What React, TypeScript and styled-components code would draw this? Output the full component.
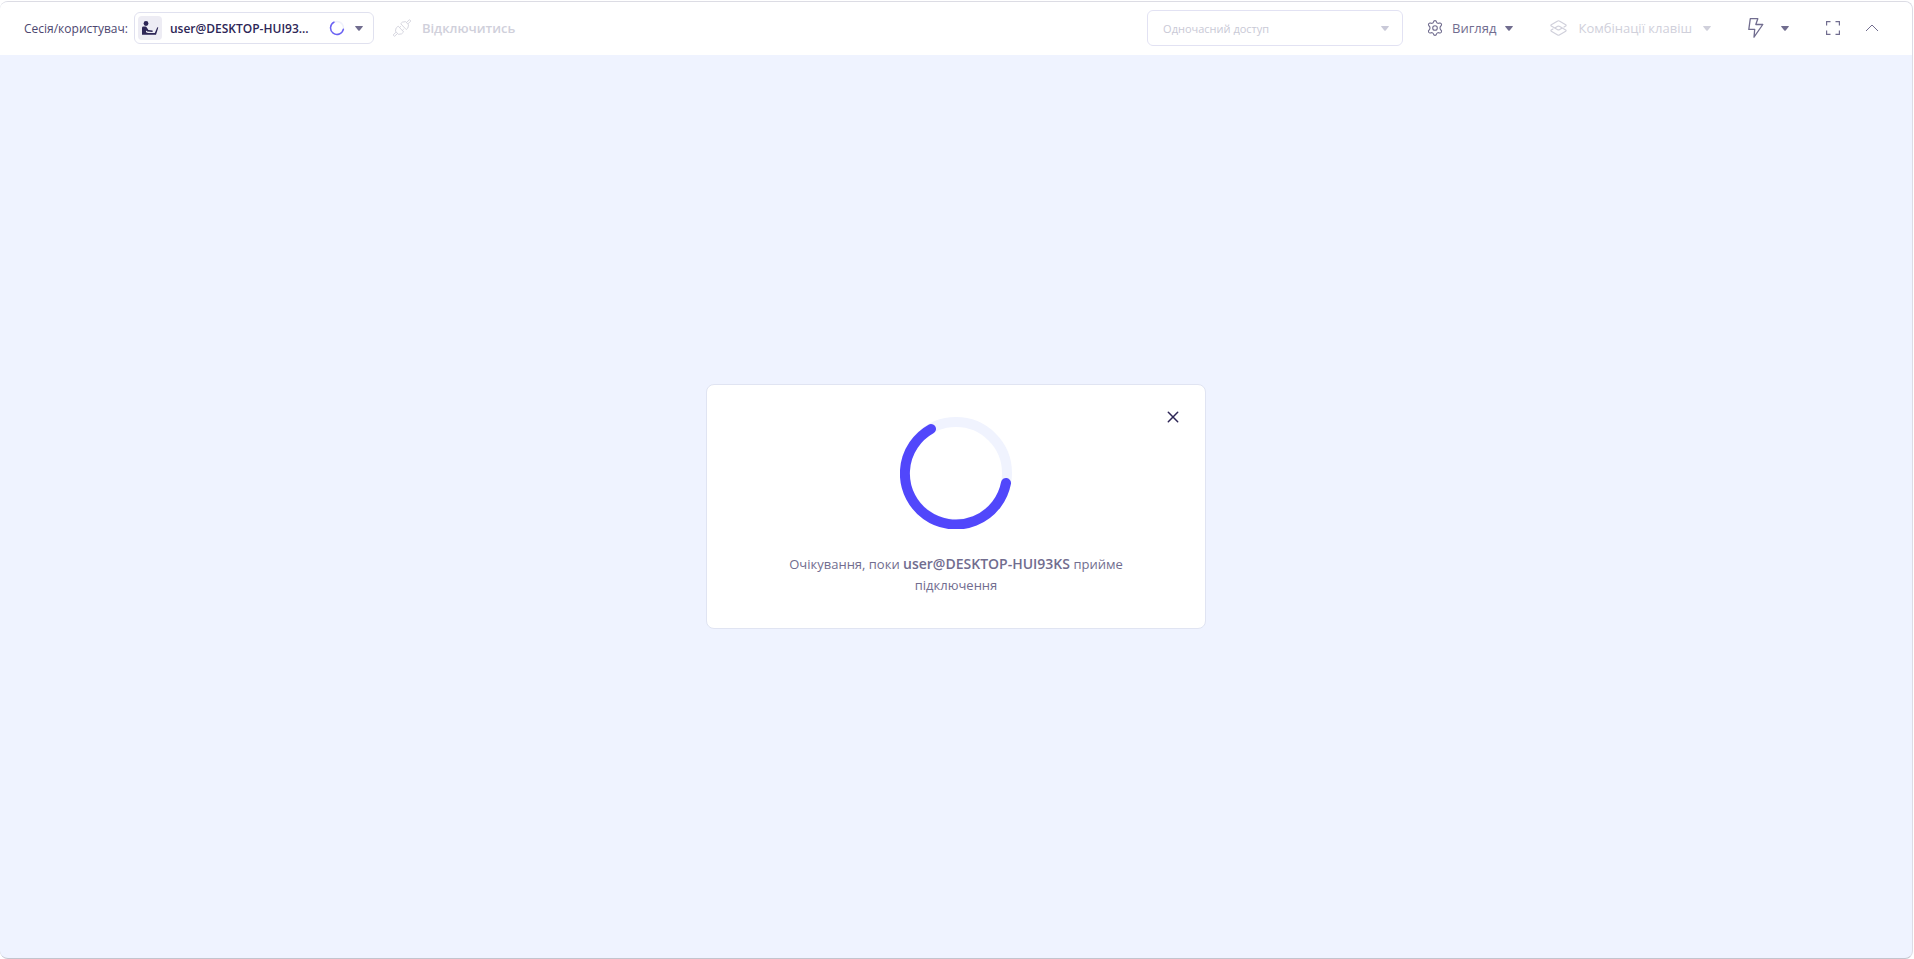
import React from 'react';
import styled, { createGlobalStyle } from 'styled-components';

const GlobalStyle = createGlobalStyle`
  *, *::before, *::after { box-sizing: border-box; }
  body {
    margin: 0;
    background: #ffffff;
    font-family: "Open Sans", "Noto Sans", sans-serif;
    color: #2d2656;
  }
  button, select { font-family: inherit; }
`;

const Window = styled.div`
  display: flex;
  flex-direction: column;
  height: calc(100vh - 1px);
  margin: 1px 1px 0 0;
  border: 1px solid #dcdce4;
  border-left-width: 0;
  border-bottom-color: #c3c4cd;
  border-radius: 8px;
  background: #eff3ff;
  overflow: hidden;
`;

const Toolbar = styled.header`
  display: flex;
  align-items: center;
  justify-content: space-between;
  height: 53px;
  padding: 0 33px 1px 24px;
  background: #ffffff;
`;

const Group = styled.div`
  display: flex;
  align-items: center;
`;

const SessionLabel = styled.span`
  margin-right: 6px;
  font-size: 12px;
  color: #4d4770;
`;

const SessionButton = styled.button`
  display: flex;
  align-items: center;
  gap: 10px;
  width: 240px;
  height: 32px;
  margin-right: 19px;
  padding: 0 10px 0 3px;
  border: 1px solid #e0e1ef;
  border-radius: 6px;
  background: #ffffff;
  color: #716d8f;
  font-size: 12px;
  font-weight: 600;
`;

const SessionName = styled.span`
  flex: 1;
  margin-left: -2px;
  color: #2d2656;
  text-align: left;
  white-space: nowrap;
`;

const Avatar = styled.span`
  display: flex;
  width: 24px;
  height: 24px;
  border-radius: 4px;
  background: #edecf4;
`;

const ToolButton = styled.button<{ $bold?: boolean; $gap?: number }>`
  display: flex;
  align-items: center;
  gap: ${({ $gap = 9 }) => $gap}px;
  padding: 0;
  border: 0;
  background: none;
  color: #716d8f;
  font-size: 13px;
  font-weight: ${({ $bold }) => ($bold ? 600 : 500)};
  line-height: 20px;

  &:disabled { color: #d0d0db; }
`;

const CollapseButton = styled(ToolButton)`
  margin-left: -12px;
`;

const Tools = styled(Group)`
  gap: 37px;
`;

const SelectBox = styled.div`
  display: grid;
  align-items: center;
  width: 256px;
  height: 36px;
  margin-right: -13px;

  & > * { grid-area: 1 / 1; }
  & > svg { justify-self: end; margin-right: 14px; color: #c9c9d8; pointer-events: none; }
`;

const Select = styled.select`
  width: 100%;
  height: 100%;
  padding: 0 32px 0 15px;
  border: 1px solid #e2e2f3;
  border-radius: 6px;
  background: #ffffff;
  color: #c9c9d6;
  font-size: 11px;
  opacity: 1;
  appearance: none;
`;

const Stage = styled.main`
  display: flex;
  flex: 1;
  align-items: center;
  justify-content: center;
`;

const Dialog = styled.section`
  display: grid;
  grid-template-columns: 1fr auto 1fr;
  width: 500px;
  padding: 26px 26px 32px;
  border: 1px solid #e0e4f2;
  border-radius: 8px;
  background: #ffffff;
`;

const Progress = styled.svg`
  grid-column: 2;
  display: block;
  width: 112px;
  height: 112px;
  margin: 6px 0 24px;
`;

const CloseButton = styled.button`
  display: flex;
  grid-column: 3;
  justify-self: end;
  align-self: start;
  padding: 0;
  border: 0;
  background: none;
  color: #2d2656;
`;

const Message = styled.p`
  grid-column: 1 / -1;
  justify-self: center;
  max-width: 360px;
  margin: 0;
  color: #716d8f;
  font-size: 13px;
  line-height: 21px;
  text-align: center;

  strong { font-size: 14px; font-weight: 600; }
`;

const Caret = () => (
  <svg width="8" height="5" viewBox="0 0 8 5" fill="currentColor" aria-hidden="true">
    <path d="M.7 0h6.600q1 0 .4.800L4.700 4.500q-.7.700-1.400 0L.3.800Q-.3 0 .7 0Z" />
  </svg>
);

const PersonIcon = () => (
  <svg width="24" height="24" viewBox="0 0 24 24" fill="#2d2656" aria-hidden="true">
    <circle cx="8" cy="7.500" r="2.400" />
    <path d="M4 12q0-1.400 1.400-1.400h2q1 0 1.400.8l1.600 2.600 4.200.6v1.300l-5.200-.3-1.400-1v1.700l2 .8h6.800l2.500-5.900 1 .2-2.300 7.300H4Z" />
  </svg>
);

const MiniSpinner = () => (
  <svg width="16" height="16" viewBox="0 0 16 16" fill="none" strokeWidth="1.500" aria-hidden="true">
    <circle cx="8" cy="8" r="6.500" stroke="#eff1fc" />
    <path d="M5 2.200A6.500 6.500 0 1 0 14.400 9.200" stroke="#6a61f3" strokeLinecap="round" />
  </svg>
);

const PlugIcon = () => (
  <svg width="18" height="18" viewBox="0 0 18 18" fill="none" stroke="currentColor" strokeWidth=".8" strokeLinejoin="round" aria-hidden="true">
    <g transform="translate(9 9) rotate(-43)">
      <path d="M-1.500-4h-2.800L-7-2.200v4.400L-4.300 4h2.800ZM-7-1h-4.200v2H-7M-1.500-2H.4M-1.500 2H.4" />
      <path d="M2-4h2.300L7-2.200v4.400L4.300 4H2ZM7-1h4.200v2H7" />
    </g>
  </svg>
);

const GearIcon = () => (
  <svg width="16" height="16" viewBox="0 0 16 16" fill="none" stroke="currentColor" strokeWidth="1.100" strokeLinejoin="round" aria-hidden="true">
    <path d="M6.500 1.800Q6.700.6 8 .6t1.500 1.200q.2 1.200 1.300 1.500.7.200 1.500-.2 1.300-.4 2 .7.800 1.300-.4 2.200Q13 6.800 13 8t.9 2q1.200.9.4 2.200-.7 1.100-2 .7-.8-.4-1.500-.2-1.100.3-1.300 1.500-.2 1.200-1.500 1.200t-1.500-1.200q-.2-1.200-1.300-1.500-.7-.2-1.500.2-1.300.4-2-.7-.8-1.300.4-2.200.9-.8.900-2t-.9-2Q.9 5.100 1.700 3.800q.7-1.100 2-.7.8.4 1.500.2 1.100-.3 1.300-1.500Z" />
    <circle cx="8" cy="8" r="2.300" />
  </svg>
);

const LayersIcon = () => (
  <svg width="17" height="16" viewBox="0 0 17 16" fill="none" stroke="currentColor" strokeWidth="1.200" strokeLinejoin="round" strokeLinecap="round" aria-hidden="true">
    <path d="M11.800 8.200 9.300 9.700q-.8.500-1.600 0L1.300 6Q.5 5.400 1.300 4.800L7.700 1q.8-.5 1.600 0l6.400 3.800q.8.600 0 1.200L14 7" />
    <path d="M5.200 7.800 7.700 6.300q.8-.5 1.600 0l6.400 3.700q.8.600 0 1.200L9.300 15q-.8.500-1.600 0l-6.400-3.800q-.8-.6 0-1.200L3 9" />
  </svg>
);

const BoltIcon = () => (
  <svg width="16" height="20" viewBox="0 0 16 20" fill="none" stroke="currentColor" strokeWidth="1.300" strokeLinejoin="round" aria-hidden="true">
    <path d="M2.300.700h7.500L7.800 6.500h7L6 19.200l.7-7.800H.8Z" />
  </svg>
);

const FullscreenIcon = () => (
  <svg width="14" height="14" viewBox="0 0 14 14" fill="none" stroke="currentColor" strokeWidth="1.200" aria-hidden="true">
    <path d="M4.500.6H.6v3.900M9.500.6h3.900v3.900M13.400 9.500v3.900H9.500M4.500 13.400H.6V9.500" />
  </svg>
);

const ChevronIcon = () => (
  <svg width="14" height="9" viewBox="0 0 14 9" fill="none" stroke="currentColor" strokeWidth="1" aria-hidden="true">
    <path d="m1 7 6-6 6 6" />
  </svg>
);

const CloseIcon = () => (
  <svg width="12" height="12" viewBox="0 0 12 12" fill="none" stroke="currentColor" strokeWidth="1.500" strokeLinecap="round" aria-hidden="true">
    <path d="m1.300 1.300 9.400 9.400M10.700 1.300 1.300 10.700" />
  </svg>
);

export default function App() {
  return (
    <>
      <GlobalStyle />
      <Window>
        <Toolbar>
          <Group>
            <SessionLabel id="session-label">Сесія/користувач:</SessionLabel>
            <SessionButton type="button" aria-labelledby="session-label session-name">
              <Avatar><PersonIcon /></Avatar>
              <SessionName id="session-name">user@DESKTOP-HUI93...</SessionName>
              <MiniSpinner />
              <Caret />
            </SessionButton>
            <ToolButton type="button" disabled $bold $gap={11}>
              <PlugIcon />
              Відключитись
            </ToolButton>
          </Group>
          <Tools>
            <SelectBox>
              <Select disabled aria-label="Одночасний доступ" defaultValue="shared">
                <option value="shared">Одночасний доступ</option>
              </Select>
              <Caret />
            </SelectBox>
            <ToolButton type="button">
              <GearIcon />
              Вигляд
              <Caret />
            </ToolButton>
            <ToolButton type="button" disabled $gap={11}>
              <LayersIcon />
              Комбінації клавіш
              <Caret />
            </ToolButton>
            <ToolButton type="button" $gap={17} aria-label="Швидкі дії">
              <BoltIcon />
              <Caret />
            </ToolButton>
            <ToolButton type="button" aria-label="На весь екран">
              <FullscreenIcon />
            </ToolButton>
            <CollapseButton type="button" aria-label="Згорнути">
              <ChevronIcon />
            </CollapseButton>
          </Tools>
        </Toolbar>
        <Stage>
          <Dialog role="dialog" aria-labelledby="wait-message">
            <Progress viewBox="0 0 112 112" fill="none" strokeWidth="10" aria-hidden="true">
              <circle cx="56" cy="56" r="51" stroke="#f0f3fe" />
              <path d="M31 12A51 51 0 1 0 106 66" stroke="#5147fb" strokeLinecap="round" />
            </Progress>
            <CloseButton type="button" aria-label="Закрити">
              <CloseIcon />
            </CloseButton>
            <Message id="wait-message">
              Очікування, поки <strong>user@DESKTOP-HUI93KS</strong> прийме
              <br />
              підключення
            </Message>
          </Dialog>
        </Stage>
      </Window>
    </>
  );
}
